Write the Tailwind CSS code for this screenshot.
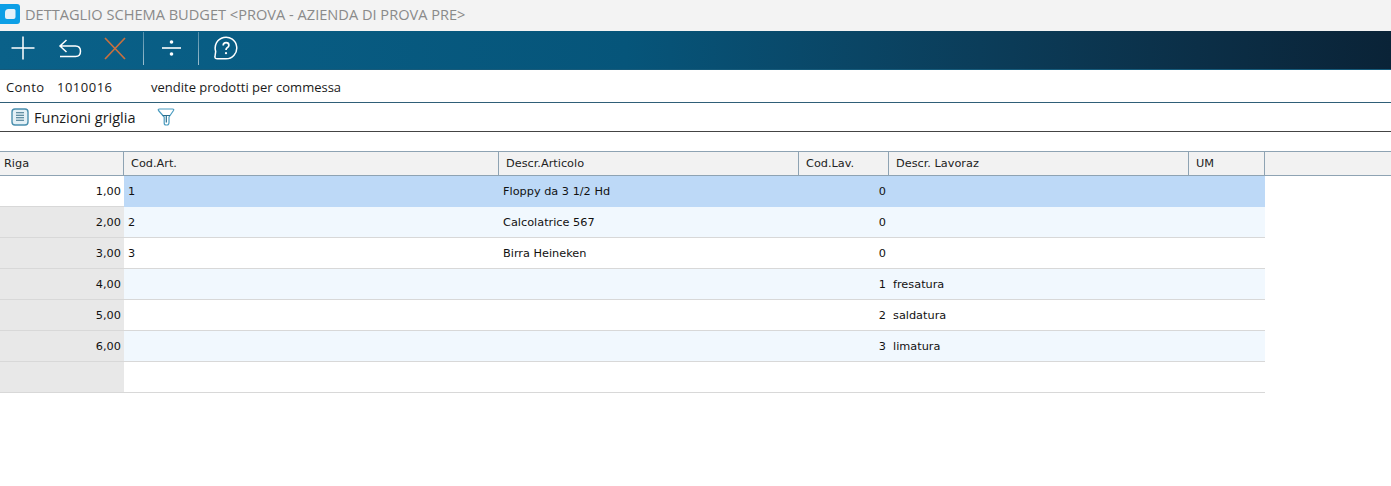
<!DOCTYPE html>
<html lang="en">
<head>
<meta charset="UTF-8" />
<title>Dettaglio schema budget</title>
<script src="https://cdn.jsdelivr.net/npm/@tailwindcss/browser@4"></script>
</head>
<body class="bg-white h-[486px] overflow-hidden font-['Open_Sans',sans-serif] text-[#1a1a1a]">

<!-- Title bar -->
<div class="h-[31px] bg-[#f3f3f3] flex items-center">
  <svg class="w-[20px] h-[20px] -mt-[3px]" viewBox="0 0 20 20">
    <path d="M0 0h17q3 0 3 3v14q0 3-3 3H0z" fill="#0c9fe6"/>
    <path d="M8.500 5H14q1.500 0 1.500 1.500V13q0 2-2 2H7q-2 0-2-2V8.500q0-3.500 3.500-3.500z" fill="#e6f2f9"/>
  </svg>
  <span class="ml-[5px] -mt-[1px] text-[14.6px] text-[#8a8a8a]">DETTAGLIO SCHEMA BUDGET &lt;PROVA - AZIENDA DI PROVA PRE&gt;</span>
</div>

<!-- Toolbar -->
<div class="h-[39px] pb-[4px] bg-gradient-to-r from-[#0a6189] via-[#06557a] via-45% to-[#0a2337] border-b border-[#165a7a] flex items-center">
  <button class="w-[46px] h-full flex items-center justify-center">
    <svg class="w-[24px] h-[24px]" viewBox="0 0 24 24" fill="none" stroke="#fff" stroke-width="1.500"><path d="M12 0.500v23M0.500 12h23"/></svg>
  </button>
  <button class="w-[48px] h-full flex items-center justify-center">
    <svg class="w-[24px] h-[19px]" viewBox="0 0 24 19" fill="none" stroke="#fff" stroke-width="1.500"><path d="M8.500 1 2 7l6.500 6M2 7h15.500q5 0 5 5.300t-5 5.200H2"/></svg>
  </button>
  <button class="w-[41px] h-full flex items-center justify-center">
    <svg class="w-[22px] h-[23px]" viewBox="0 0 22 23" fill="none" stroke="#c8703f" stroke-width="1.700"><path d="M1 1l20 21M21 1 1 22"/></svg>
  </button>
  <div class="ml-[8px] w-px h-[33px] bg-gradient-to-b from-white/30 to-white/60"></div>
  <button class="w-[54px] h-full flex items-center justify-center">
    <svg class="w-[19px] h-[16px]" viewBox="0 0 19 16" fill="#fff"><path d="M0 7.200h19v1.600H0z"/><circle cx="9.500" cy="2" r="1.800"/><circle cx="9.500" cy="14" r="1.800"/></svg>
  </button>
  <div class="w-px h-[33px] bg-gradient-to-b from-white/30 to-white/60"></div>
  <button class="w-[53px] h-full flex items-center justify-center">
    <svg class="w-[24px] h-[24px]" viewBox="0 0 24 24" fill="none" stroke="#fff" stroke-width="1.500">
      <path d="M3.500 22.800H12a10.800 10.800 0 1 0-10.300-7.400L1 20.500q-.4 2.300 2.500 2.300z" stroke-linejoin="round"/>
      <path d="M9.200 9.600q0-2.900 2.900-2.900 2.800 0 2.800 2.500 0 1.500-1.700 2.500-1.200.7-1.200 2.300" stroke-width="1.700"/>
      <circle cx="12" cy="17.200" r="1.100" fill="#fff" stroke="none"/>
    </svg>
  </button>
</div>

<!-- Account -->
<div class="h-[33px] pt-[3px] flex items-center border-b border-[#2f5f78] text-[13px] pl-[6px]">
  <span class="w-[51px] tracking-[0.4px]">Conto</span>
  <span class="w-[94px] tracking-[0.5px]">1010016</span>
  <span>vendite prodotti per commessa</span>
</div>

<!-- Grid functions -->
<div class="h-[29px] flex items-center border-b border-[#444] text-[14.5px] pl-[11px]">
  <svg class="w-[18px] h-[18px]" viewBox="0 0 18 18" fill="none" stroke="#4a8fae" stroke-width="1.400">
    <rect x="1" y="1" width="16" height="16" rx="3" fill="#e3f0f6"/>
    <path d="M5 4.800h8M5 7.300h8M5 9.800h8M5 12.300h8" stroke="#3a6f88" stroke-width="1.100"/>
  </svg>
  <span class="ml-[5px] pt-[1px]">Funzioni griglia</span>
  <svg class="ml-[22px] w-[18px] h-[18px]" viewBox="0 0 18 18" fill="none" stroke="#4a9cc0" stroke-width="1.200">
    <path d="M2.500 1h13q1.800 0 1 1.500L12 9v5.500q0 2.500-2 2.500H9q-1.800 0-1.800-2V9L1.500 2.500Q.700 1 2.500 1z" stroke-linejoin="round"/>
    <path d="M5.500 7.500h7.500M9.300 7.500v7" stroke="#2a6f8f"/>
  </svg>
</div>

<!-- Grid -->
<div class="mt-[19px] font-['DejaVu_Sans',sans-serif] text-[11.3px] text-[#111]">
  <div class="h-[25px] flex bg-[#f2f2f2] border-y border-[#8ea3b3] text-[#222]">
    <div class="w-[124px] pl-[4px] pt-[4px] border-r border-[#8ea3b3]">Riga</div>
    <div class="w-[375px] pl-[7px] pt-[4px] border-r border-[#8ea3b3]">Cod.Art.</div>
    <div class="w-[300px] pl-[7px] pt-[4px] border-r border-[#8ea3b3]">Descr.Articolo</div>
    <div class="w-[90px] pl-[7px] pt-[4px] border-r border-[#8ea3b3]">Cod.Lav.</div>
    <div class="w-[300px] pl-[7px] pt-[4px] border-r border-[#8ea3b3]">Descr. Lavoraz</div>
    <div class="w-[76px] pl-[7px] pt-[4px] border-r border-[#8ea3b3]">UM</div>
  </div>

  <div class="w-[1265px]">
    <div class="h-[31px] flex items-center bg-[#bdd9f7]">
      <div class="w-[124px] h-full bg-white border-b border-[#d8d8d8] pt-[2px] flex items-center justify-end pr-[3px]">1,00</div>
      <div class="w-[375px] pl-[4px] pt-[2px]">1</div>
      <div class="w-[300px] pl-[4px] pt-[2px]">Floppy da 3 1/2 Hd</div>
      <div class="w-[90px] text-right pr-[3px] pt-[2px]">0</div>
    </div>
    <div class="h-[31px] flex items-center bg-[#f1f8fe] border-b border-[#d8d8d8]">
      <div class="w-[124px] h-full bg-[#e8e8e8] pt-[2px] flex items-center justify-end pr-[3px]">2,00</div>
      <div class="w-[375px] pl-[4px] pt-[2px]">2</div>
      <div class="w-[300px] pl-[4px] pt-[2px]">Calcolatrice 567</div>
      <div class="w-[90px] text-right pr-[3px] pt-[2px]">0</div>
    </div>
    <div class="h-[31px] flex items-center bg-white border-b border-[#d8d8d8]">
      <div class="w-[124px] h-full bg-[#e8e8e8] pt-[2px] flex items-center justify-end pr-[3px]">3,00</div>
      <div class="w-[375px] pl-[4px] pt-[2px]">3</div>
      <div class="w-[300px] pl-[4px] pt-[2px]">Birra Heineken</div>
      <div class="w-[90px] text-right pr-[3px] pt-[2px]">0</div>
    </div>
    <div class="h-[31px] flex items-center bg-[#f1f8fe] border-b border-[#d8d8d8]">
      <div class="w-[124px] h-full bg-[#e8e8e8] pt-[2px] flex items-center justify-end pr-[3px]">4,00</div>
      <div class="w-[675px]"></div>
      <div class="w-[90px] text-right pr-[3px] pt-[2px]">1</div>
      <div class="pl-[4px] pt-[2px]">fresatura</div>
    </div>
    <div class="h-[31px] flex items-center bg-white border-b border-[#d8d8d8]">
      <div class="w-[124px] h-full bg-[#e8e8e8] pt-[2px] flex items-center justify-end pr-[3px]">5,00</div>
      <div class="w-[675px]"></div>
      <div class="w-[90px] text-right pr-[3px] pt-[2px]">2</div>
      <div class="pl-[4px] pt-[2px]">saldatura</div>
    </div>
    <div class="h-[31px] flex items-center bg-[#f1f8fe] border-b border-[#d8d8d8]">
      <div class="w-[124px] h-full bg-[#e8e8e8] pt-[2px] flex items-center justify-end pr-[3px]">6,00</div>
      <div class="w-[675px]"></div>
      <div class="w-[90px] text-right pr-[3px] pt-[2px]">3</div>
      <div class="pl-[4px] pt-[2px]">limatura</div>
    </div>
    <div class="h-[31px] flex bg-white border-b border-[#d8d8d8]">
      <div class="w-[124px] h-full bg-[#e8e8e8]"></div>
    </div>
  </div>
</div>

</body>
</html>
